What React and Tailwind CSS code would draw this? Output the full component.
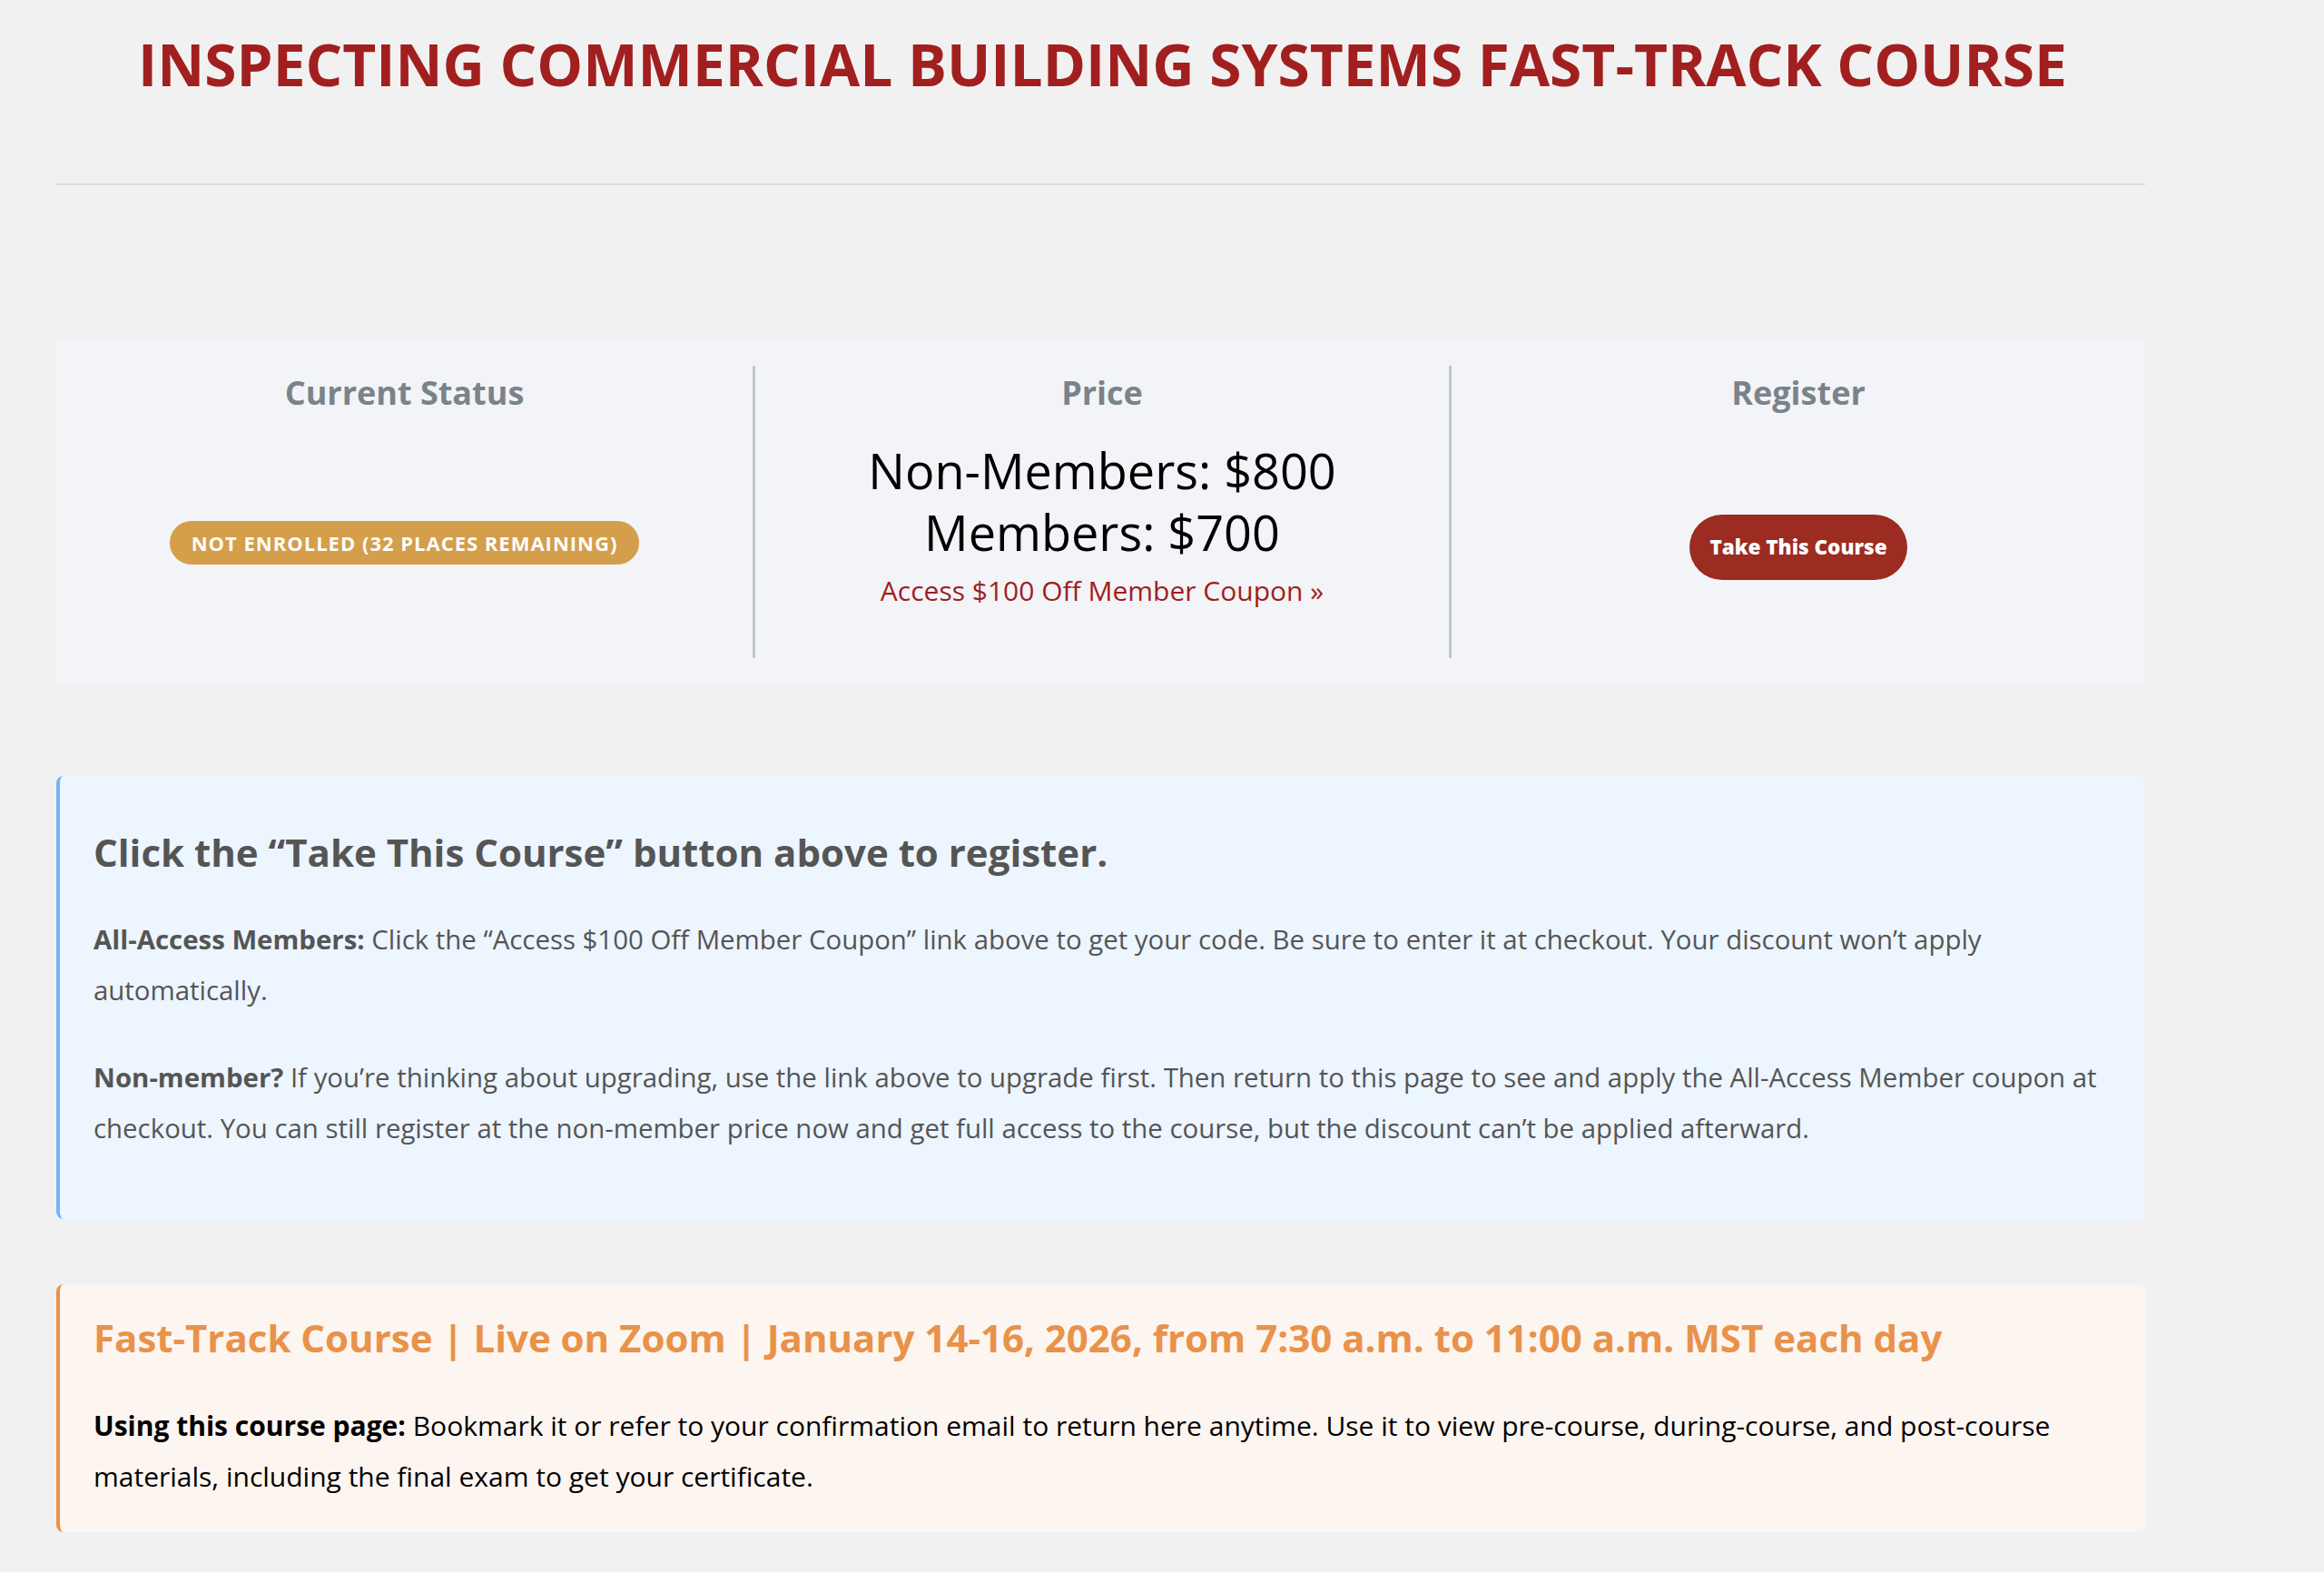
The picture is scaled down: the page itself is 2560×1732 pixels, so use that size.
import React from "react";

export default function App() {
  return (
    <div className="min-h-[1732px] bg-[#f1f1f1] font-['Open_Sans',sans-serif]">
      <div className="ml-[62px] w-[2301px]">
        <h1 className="pl-[90px] pt-[39px] text-[64px] leading-[64px] font-bold text-[#a21f1f] whitespace-nowrap">
          INSPECTING COMMERCIAL BUILDING SYSTEMS FAST-TRACK COURSE
        </h1>
        <div className="mt-[99px] h-[2px] bg-[#dcdcdc]" />

        <div className="mt-[170px] rounded-[8px] bg-[#f2f4f7] py-[29px] grid grid-cols-3">
          <div className="flex flex-col items-center h-[322px]">
            <h3 className="mt-[8px] text-[36px] leading-[44px] font-bold text-[#7a838a]">Current Status</h3>
            <span className="mt-[119px] h-[48px] px-[24px] rounded-full bg-[#d49e4b] text-white font-bold text-[22px] tracking-[1px] flex items-center whitespace-nowrap">
              NOT ENROLLED (32 PLACES REMAINING)
            </span>
          </div>
          <div className="flex flex-col items-center h-[322px] border-l-[3px] border-[#c0c6cc]">
            <h3 className="mt-[8px] text-[36px] leading-[44px] font-bold text-[#7a838a]">Price</h3>
            <div className="mt-[29px] text-[54px] leading-[68px] text-black text-center">
              <div>Non-Members: $800</div>
              <div>Members: $700</div>
            </div>
            <a className="mt-[11px] text-[30px] leading-[40px] text-[#a11d1d]">Access $100 Off Member Coupon »</a>
          </div>
          <div className="flex flex-col items-center h-[322px] border-l-[3px] border-[#c0c6cc]">
            <h3 className="mt-[8px] text-[36px] leading-[44px] font-bold text-[#7a838a]">Register</h3>
            <button className="mt-[112px] h-[72px] px-[22px] rounded-full bg-[#9c2b21] text-white font-extrabold text-[22.5px]">
              Take This Course
            </button>
          </div>
        </div>

        <div className="mt-[101px] rounded-[8px] bg-[#edf5fe] border-l-[4px] border-[#72b4f6] pl-[37px] pr-[40px] pt-[59px] pb-[72px] text-[#555555]">
          <h2 className="text-[42px] leading-[50px] font-bold text-[#555555]">
            Click the “Take This Course” button above to register.
          </h2>
          <p className="mt-[43px] text-[29.4px] leading-[56px]">
            <strong>All-Access Members:</strong> Click the “Access $100 Off Member Coupon” link above to get your code. Be sure to enter it at checkout. Your discount won’t apply automatically.
          </p>
          <p className="mt-[40px] text-[29.4px] leading-[56px]">
            <strong>Non-member?</strong> If you’re thinking about upgrading, use the link above to upgrade first. Then return to this page to see and apply the All-Access Member coupon at checkout. You can still register at the non-member price now and get full access to the course, but the discount can’t be applied afterward.
          </p>
        </div>

        <div className="mt-[72px] rounded-[8px] bg-[#fdf5f0] border-l-[4px] border-[#e8934a] pl-[37px] pr-[40px] pt-[34px] pb-[33px] text-black">
          <h2 className="text-[42px] leading-[50px] font-bold text-[#e8924a] whitespace-nowrap">
            Fast-Track Course | Live on Zoom | January 14-16, 2026, from 7:30 a.m. to 11:00 a.m. MST each day
          </h2>
          <p className="mt-[44px] text-[30px] leading-[56px]">
            <strong>Using this course page:</strong> Bookmark it or refer to your confirmation email to return here anytime. Use it to view pre-course, during-course, and post-course materials, including the final exam to get your certificate.
          </p>
        </div>
      </div>
    </div>
  );
}
